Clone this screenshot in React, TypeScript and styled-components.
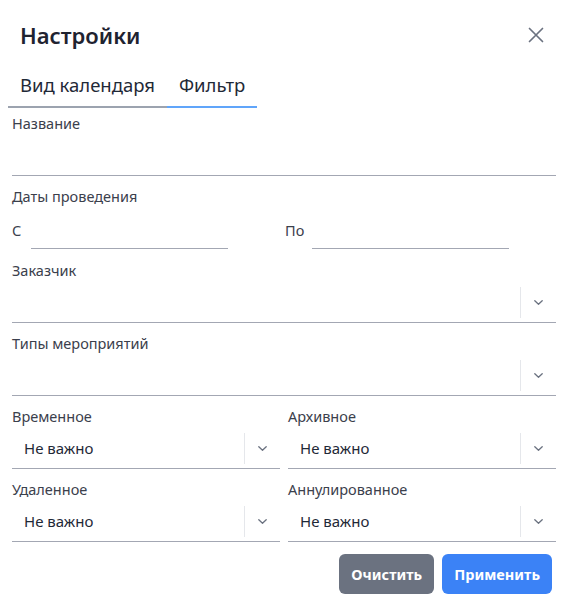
import React from "react";
import styled, { createGlobalStyle } from "styled-components";

const Global = createGlobalStyle`
  html, body { margin: 0; padding: 0; background: #ffffff; }
  body { font-family: "Noto Sans", "Open Sans", sans-serif; color: #1f2937; }
  * { box-sizing: border-box; }
`;

const Modal = styled.div`
  width: 565px;
  height: 612px;
  background: #fff;
  display: flex;
  flex-direction: column;
`;

const Header = styled.div`
  display: flex;
  align-items: center;
  justify-content: space-between;
  padding: 19px 21px 0 20px;
  height: 51px;
`;

const Title = styled.h2`
  margin: 0;
  font-size: 22px;
  line-height: 32px;
  font-weight: 600;
  color: #1f2330;
`;

const CloseButton = styled.button`
  border: 0;
  background: transparent;
  padding: 0;
  width: 16px;
  height: 16px;
  display: flex;
  color: #6b7280;
  cursor: pointer;
`;

const TabList = styled.div`
  display: flex;
  margin: 15px 0 0 8px;
`;

const Tab = styled.button<{ $active?: boolean }>`
  border: 0;
  background: transparent;
  font-family: inherit;
  font-size: 18.5px;
  line-height: 24px;
  color: #1f2937;
  padding: 7px 12px 9px 12px;
  border-bottom: 2px solid ${(p) => (p.$active ? "#60a5fa" : "#9ca3af")};
  cursor: pointer;
`;

const Form = styled.div`
  display: flex;
  flex-direction: column;
  gap: 12px;
  padding: 7px 9px 0 12px;
`;

const Field = styled.div`
  display: flex;
  flex-direction: column;
`;

const Label = styled.label`
  font-size: 14.5px;
  line-height: 19px;
  margin-top: -1px;
  padding-bottom: 2px;
  color: #3b404c;
`;

const TextInput = styled.input`
  height: 41px;
  border: 0;
  border-bottom: 1px solid #a3a7b3;
  outline: none;
  font-family: inherit;
  font-size: 15px;
  padding: 0 12px;
  background: transparent;
`;

const DateRow = styled.div`
  display: flex;
  align-items: center;
  height: 42px;
`;

const DatePart = styled.div<{ $width: number }>`
  display: flex;
  align-items: center;
  width: ${(p) => p.$width}px;
`;

const DateLabel = styled.span<{ $gap: number }>`
  font-size: 14.5px;
  line-height: 20px;
  color: #3b404c;
  margin-right: ${(p) => p.$gap}px;
  margin-top: 2px;
`;

const DateInput = styled.input`
  width: 197px;
  height: 36px;
  margin-top: 4px;
  border: 0;
  border-bottom: 1px solid #a3a7b3;
  outline: none;
  background: transparent;
`;

const Grid = styled.div`
  display: grid;
  grid-template-columns: 1fr 1fr;
  column-gap: 8px;
  row-gap: 12px;
`;

const SelectBox = styled.div`
  height: 41px;
  display: flex;
  align-items: center;
  border-bottom: 1px solid #a3a7b3;
`;

const SelectValue = styled.div`
  flex: 1;
  padding-left: 12px;
  font-size: 15px;
  line-height: 20px;
  color: #1f2937;
`;

const Separator = styled.span`
  width: 1px;
  align-self: stretch;
  margin: 5px 0 4px;
  background: #e5e7eb;
`;

const Indicator = styled.div`
  width: 35px;
  display: flex;
  align-items: center;
  justify-content: center;
  color: #6b7280;
`;

const Footer = styled.div`
  display: flex;
  justify-content: flex-end;
  gap: 8px;
  padding: 12px 13px 0 0;
`;

const Button = styled.button<{ $variant: "secondary" | "primary" }>`
  height: 40px;
  border: 0;
  border-radius: 6px;
  padding: 0 12px;
  font-family: inherit;
  font-size: 14.5px;
  font-weight: 700;
  color: #fff;
  background: ${(p) => (p.$variant === "primary" ? "#3b82f6" : "#6b7280")};
  cursor: pointer;
`;

const Chevron = () => (
  <svg width="9" height="5" viewBox="0 0 9 5" fill="none">
    <path d="M0.8 0.8l3.7 3.5 3.7-3.5" stroke="currentColor" strokeWidth="1.3" strokeLinecap="round" strokeLinejoin="round" />
  </svg>
);

const Select: React.FC<{ value?: string }> = ({ value }) => (
  <SelectBox>
    <SelectValue>{value}</SelectValue>
    <Separator />
    <Indicator>
      <Chevron />
    </Indicator>
  </SelectBox>
);

export default function App() {
  return (
    <>
      <Global />
      <Modal>
        <Header>
          <Title>Настройки</Title>
          <CloseButton aria-label="Закрыть">
            <svg width="16" height="16" viewBox="0 0 16 16" fill="none">
              <path d="M1.5 1.5l13 13M14.5 1.5l-13 13" stroke="currentColor" strokeWidth="1.7" strokeLinecap="round" />
            </svg>
          </CloseButton>
        </Header>
        <TabList>
          <Tab>Вид календаря</Tab>
          <Tab $active>Фильтр</Tab>
        </TabList>
        <Form>
          <Field>
            <Label>Название</Label>
            <TextInput />
          </Field>
          <Field>
            <Label>Даты проведения</Label>
            <DateRow>
              <DatePart $width={273}>
                <DateLabel $gap={10}>С</DateLabel>
                <DateInput />
              </DatePart>
              <DatePart $width={271}>
                <DateLabel $gap={8}>По</DateLabel>
                <DateInput />
              </DatePart>
            </DateRow>
          </Field>
          <Field>
            <Label>Заказчик</Label>
            <Select />
          </Field>
          <Field>
            <Label>Типы мероприятий</Label>
            <Select />
          </Field>
          <Grid>
            <Field>
              <Label>Временное</Label>
              <Select value="Не важно" />
            </Field>
            <Field>
              <Label>Архивное</Label>
              <Select value="Не важно" />
            </Field>
            <Field>
              <Label>Удаленное</Label>
              <Select value="Не важно" />
            </Field>
            <Field>
              <Label>Аннулированное</Label>
              <Select value="Не важно" />
            </Field>
          </Grid>
        </Form>
        <Footer>
          <Button $variant="secondary">Очистить</Button>
          <Button $variant="primary">Применить</Button>
        </Footer>
      </Modal>
    </>
  );
}
